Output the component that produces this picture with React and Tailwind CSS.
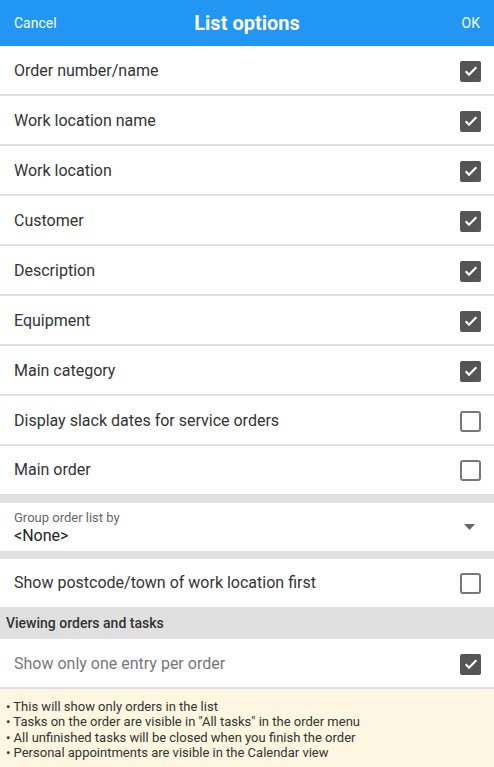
import { useState } from "react";

const options = [
  { label: "Order number/name", checked: true },
  { label: "Work location name", checked: true },
  { label: "Work location", checked: true },
  { label: "Customer", checked: true },
  { label: "Description", checked: true },
  { label: "Equipment", checked: true },
  { label: "Main category", checked: true },
  { label: "Display slack dates for service orders", checked: false },
  { label: "Main order", checked: false },
];

function Box({ checked }) {
  if (checked) {
    return (
      <div className="w-[21px] h-[21px] rounded-[2px] bg-[#555555] flex items-center justify-center">
        <svg width="16" height="16" viewBox="0 0 24 24">
          <path d="M4 12.5l5 5L20 6.5" fill="none" stroke="#fff" strokeWidth="3.2" />
        </svg>
      </div>
    );
  }
  return <div className="w-[21px] h-[21px] rounded-[3px] border-2 border-[#777777]" />;
}

function Row({ label, checked, muted, onToggle, last }) {
  return (
    <div
      onClick={onToggle}
      className={`flex items-center justify-between pl-[14px] pr-[13px] bg-white shrink-0 ${last ? "h-[48px]" : "h-[50px] pt-[2px] border-b-2 border-[#e0e0e0]"}`}
    >
      <span className={`text-[16px] ${muted ? "text-[#777777]" : "text-[#333333]"}`}>{label}</span>
      <Box checked={checked} />
    </div>
  );
}

export default function App() {
  const [opts, setOpts] = useState(options);
  const [postcode, setPostcode] = useState(false);
  const [oneEntry, setOneEntry] = useState(true);

  const toggle = (i) =>
    setOpts((o) => o.map((x, j) => (j === i ? { ...x, checked: !x.checked } : x)));

  return (
    <div className="w-[494px] h-[767px] bg-white overflow-hidden flex flex-col" style={{ fontFamily: "Roboto, 'Noto Sans', sans-serif" }}>
      {/* header */}
      <div className="h-[46px] bg-[#2196f3] flex items-center px-[14px] text-white shrink-0">
        <span className="flex-1 text-[14px]">Cancel</span>
        <span className="text-[20px] font-bold">List options</span>
        <span className="flex-1 text-right text-[14px]">OK</span>
      </div>

      {opts.map((o, i) => (
        <Row key={o.label} label={o.label} checked={o.checked} onToggle={() => toggle(i)} last={i === opts.length - 1} />
      ))}

      <div className="h-[9px] bg-[#e0e0e0] shrink-0" />

      {/* dropdown */}
      <div className="h-[48px] bg-white flex items-center justify-between pl-[14px] pr-[19px] shrink-0">
        <div className="flex flex-col leading-none">
          <span className="text-[13px] text-[#666666]">Group order list by</span>
          <span className="text-[16px] text-[#222222] mt-[4px]">&lt;None&gt;</span>
        </div>
        <svg width="11" height="6" viewBox="0 0 11 6">
          <path d="M0 0h11L5.5 6z" fill="#666666" />
        </svg>
      </div>

      <div className="h-[8px] bg-[#e0e0e0] shrink-0" />

      <Row label="Show postcode/town of work location first" checked={postcode} onToggle={() => setPostcode(!postcode)} last />

      {/* section header */}
      <div className="h-[32px] bg-[#e0e0e0] flex items-center px-[6px] shrink-0">
        <span className="text-[14px] font-medium text-[#333333]">Viewing orders and tasks</span>
      </div>

      <Row label="Show only one entry per order" muted checked={oneEntry} onToggle={() => setOneEntry(!oneEntry)} />

      {/* info */}
      <div className="flex-1 bg-[#fdf6e0] px-[6px] pt-[10px] text-[13px] leading-[15.3px] text-[#333333]">
        <div>• This will show only orders in the list</div>
        <div>• Tasks on the order are visible in "All tasks" in the order menu</div>
        <div>• All unfinished tasks will be closed when you finish the order</div>
        <div>• Personal appointments are visible in the Calendar view</div>
      </div>
    </div>
  );
}
